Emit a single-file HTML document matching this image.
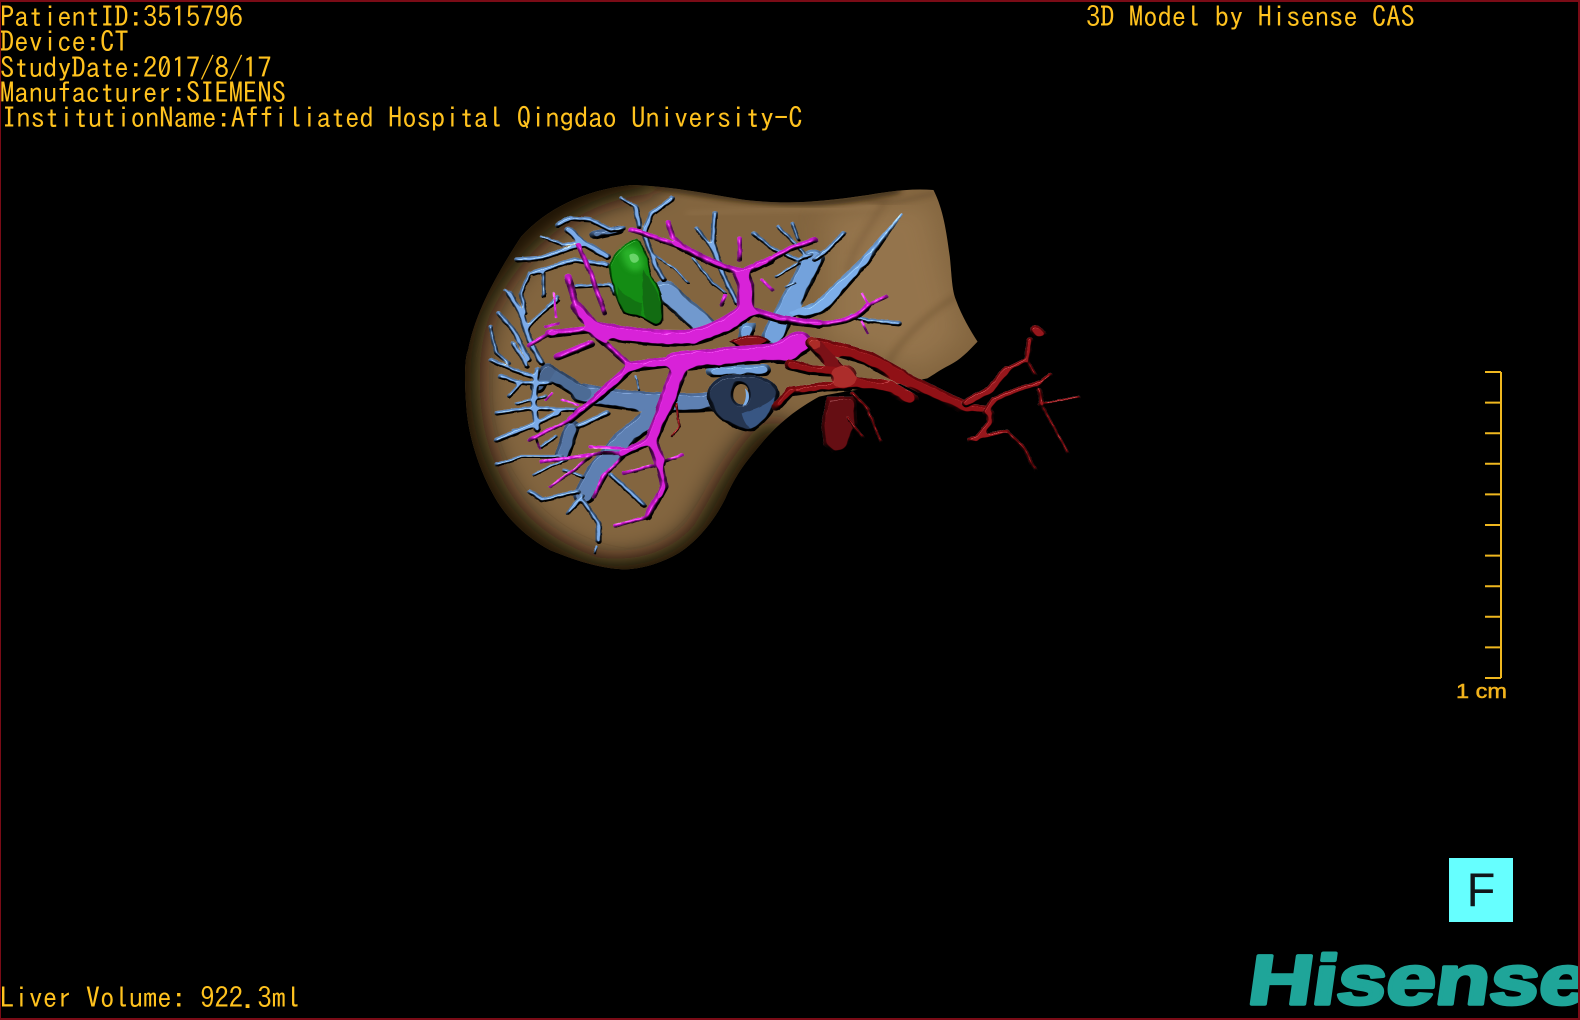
<!DOCTYPE html>
<html lang="en">
<head>
<meta charset="utf-8">
<title>3D Model by Hisense CAS</title>
<style>
html,body{margin:0;padding:0;background:#000;}
#stage{position:relative;width:1580px;height:1020px;background:#000;overflow:hidden;}
#frame{position:absolute;left:0;top:0;width:1577px;height:1016px;border:1px solid #7a0b16;border-top-width:2px;border-right-width:2px;border-bottom-width:2px;pointer-events:none;z-index:5;}
.t{position:absolute;left:0;white-space:pre;font-family:"IPAGothic","Liberation Mono",monospace;font-size:28.6px;line-height:30px;color:#ffc21e;}
#fbox{position:absolute;left:1449px;top:858px;width:64px;height:64px;background:#66ffff;color:#10161a;font-family:"Liberation Sans",sans-serif;font-size:47px;line-height:64px;text-align:center;}
svg{position:absolute;left:0;top:0;}
.z path{stroke-linecap:round;stroke-linejoin:round;}
</style>
</head>
<body>
<div id="stage">
<svg width="1580" height="1020" viewBox="0 0 1580 1020" xmlns="http://www.w3.org/2000/svg">
<defs>
<filter id="blur30" x="-30%" y="-30%" width="160%" height="160%"><feGaussianBlur stdDeviation="34"/></filter>
<filter id="blur8" x="-30%" y="-30%" width="160%" height="160%"><feGaussianBlur stdDeviation="8"/></filter>
<filter id="tube" x="-5%" y="-5%" width="110%" height="110%" color-interpolation-filters="sRGB">
<feTurbulence type="fractalNoise" baseFrequency=".09" numOctaves="2" seed="4" result="n"/>
<feDisplacementMap in="SourceGraphic" in2="n" scale="2.500" xChannelSelector="R" yChannelSelector="G" result="g"/>
<feGaussianBlur in="g" stdDeviation="1.700" result="b"/>
<feComposite in="b" in2="n" operator="arithmetic" k1="0" k2="1" k3=".3" k4="0" result="bump"/>
<feDiffuseLighting in="bump" surfaceScale="7" diffuseConstant="1.150" lighting-color="#fff" result="d"><feDistantLight azimuth="250" elevation="60"/></feDiffuseLighting>
<feBlend in="g" in2="d" mode="multiply" result="m"/>
<feSpecularLighting in="bump" surfaceScale="7" specularConstant=".7" specularExponent="22" lighting-color="#fff" result="s"><feDistantLight azimuth="250" elevation="38"/></feSpecularLighting>
<feComposite in="m" in2="s" operator="arithmetic" k1="0" k2="1" k3=".75" k4="0" result="r"/>
<feComposite in="r" in2="g" operator="in"/>
</filter>
<filter id="trunk" x="-5%" y="-5%" width="110%" height="110%" color-interpolation-filters="sRGB">
<feTurbulence type="fractalNoise" baseFrequency=".07" numOctaves="2" seed="9" result="n"/>
<feDisplacementMap in="SourceGraphic" in2="n" scale="2" xChannelSelector="R" yChannelSelector="G" result="g"/>
<feGaussianBlur in="g" stdDeviation="3.200" result="b"/>
<feComposite in="b" in2="n" operator="arithmetic" k1="0" k2="1" k3=".4" k4="0" result="bump"/>
<feDiffuseLighting in="bump" surfaceScale="11" diffuseConstant="1.150" lighting-color="#fff" result="d"><feDistantLight azimuth="250" elevation="60"/></feDiffuseLighting>
<feBlend in="g" in2="d" mode="multiply" result="m"/>
<feSpecularLighting in="bump" surfaceScale="11" specularConstant=".6" specularExponent="26" lighting-color="#fff" result="s"><feDistantLight azimuth="250" elevation="38"/></feSpecularLighting>
<feComposite in="m" in2="s" operator="arithmetic" k1="0" k2="1" k3=".7" k4="0" result="r"/>
<feComposite in="r" in2="g" operator="in"/>
</filter>
<clipPath id="lc"><path transform="translate(460,170) scale(.40816,.33333)" d="M420,45 C520,48 620,75 700,90 C790,102 860,100 1000,75 C1060,62 1110,55 1160,60 C1185,120 1192,190 1200,260 C1205,320 1205,360 1215,390 C1230,440 1250,480 1268,515 C1245,545 1225,570 1200,585 C1175,600 1160,615 1145,625 C1050,650 950,660 880,680 C820,720 770,770 725,840 C690,890 670,930 650,985 C620,1060 570,1130 520,1160 C470,1190 430,1198 400,1198 C340,1195 280,1170 220,1140 C160,1100 110,1040 80,970 C40,880 18,780 15,700 C10,620 12,560 20,540 C35,440 80,330 150,200 C210,120 300,60 420,45 Z"/></clipPath>
</defs>

<!-- liver -->
<g clip-path="url(#lc)">
<rect x="440" y="170" width="560" height="420" fill="#83653f"/>
<g class="z" fill="none" transform="translate(460,170) scale(.40816,.33333)">
<path filter="url(#blur30)" stroke="#120b04" stroke-width="110" d="M440,20 C260,50 110,190 20,420 C-20,560 -15,760 35,900 C90,1070 190,1160 320,1215 C420,1235 540,1210 620,1095 C670,1000 700,900 770,810"/>
<path filter="url(#blur30)" fill="#a5845a" stroke="none" d="M900,130 L1150,90 L1190,300 L1230,500 L1130,600 L900,500 Z" opacity=".5"/>
<path filter="url(#blur8)" stroke="#2e2010" stroke-width="18" d="M480,48 C600,72 720,98 860,98 C930,96 1000,82 1070,62" opacity=".85"/>
<path filter="url(#blur8)" stroke="#6b4f30" stroke-width="16" d="M1040,90 C1020,150 970,210 950,300" opacity=".3"/>
<path filter="url(#blur8)" stroke="#5c4428" stroke-width="16" d="M1215,380 C1130,440 1060,540 1040,600" opacity=".3"/>
<path filter="url(#blur8)" stroke="#4c3820" stroke-width="10" d="M1000,90 C1040,100 1070,100 1160,70" opacity=".4"/>
<path filter="url(#blur8)" stroke="#a88860" stroke-width="14" d="M560,130 C700,120 860,120 1020,110" opacity=".25"/>
<g stroke="#5a4226" stroke-width="2.500" opacity=".16">
<path d="M60,540 C40,720 70,880 140,990 C210,1090 300,1150 410,1165 C500,1160 570,1090 620,970"/>
<path d="M85,560 C65,720 95,860 165,965 C230,1060 310,1120 410,1135 C490,1130 550,1070 600,960"/>
<path d="M110,370 C70,440 50,500 40,560"/>
</g>
</g>
</g>

<!-- deep blue trunks -->
<g filter="url(#trunk)">
<g class="z" fill="none" transform="translate(460,170) scale(.40816,.33333)" stroke="#5779ac">
<path stroke-width="60" d="M625,695 C500,705 400,695 300,670"/>
<path stroke-width="44" stroke="#45648f" d="M300,670 L215,605"/>
<path stroke-width="56" d="M470,740 L400,810 L340,900 L305,975"/>
<path stroke-width="38" stroke="#4f6f9f" d="M275,770 L250,860"/>
<path stroke-width="26" stroke="#4e6f9e" d="M390,180 L330,195"/>
<path stroke-width="38" stroke="#425e87" d="M215,600 L190,650"/>
<path stroke-width="60" stroke="#6a93c8" d="M500,360 L600,470"/>
<path stroke-width="56" stroke="#6c9cd6" d="M865,265 L840,330 L810,400 L765,500"/>
<path stroke-width="34" stroke="#6c9cd6" d="M620,605 L745,600"/>
<path fill="#75a8e4" stroke="#75a8e4" stroke-width="6" d="M1082,133 L1000,280 L950,350 L900,420 L850,445 L810,430 L870,400 L930,330 L990,260 Z"/>
<path fill="#6c9cd6" stroke="#6c9cd6" stroke-width="3" d="M690,460 L725,460 L715,510 L680,510 Z"/>
</g>
</g>

<!-- fine blue branches -->
<g filter="url(#tube)">
<g class="z" fill="none" transform="translate(460,170) scale(.40816,.33333)" stroke="#6f9fdc">
<path stroke-width="15" d="M240,165 L270,145 L320,150 L370,180 L400,175"/>
<path stroke-width="10" d="M430,110 L395,85"/>
<path stroke-width="14" d="M430,110 L440,170"/>
<path stroke-width="14" d="M520,85 L470,130 L450,190 L480,290 L500,330"/>
<path stroke-width="16" d="M140,270 L200,265 L270,235 L310,225"/>
<path stroke-width="9" d="M200,200 L250,225 L290,215"/>
<path stroke-width="20" d="M265,180 L310,225 L360,260"/>
<path stroke-width="16" d="M180,310 L280,270 L360,285"/>
<path stroke-width="12" d="M280,350 L370,345 L380,370"/>
<path stroke-width="16" d="M120,370 L150,430 L170,510 L200,580"/>
<path stroke-width="11" d="M170,310 L150,370 L160,430"/>
<path stroke-width="11" d="M240,390 L190,440 L160,480"/>
<path stroke-width="9" d="M205,310 L205,380"/>
<path stroke-width="14" d="M95,430 L130,480 L170,570"/>
<path stroke-width="11" d="M75,470 L90,550 L120,580"/>
<path stroke-width="14" d="M75,570 L130,600 L180,620"/>
<path stroke-width="14" d="M100,620 L150,640 L220,640"/>
<path stroke-width="16" d="M190,600 L180,700 L190,780"/>
<path stroke-width="14" d="M90,730 L170,715 L280,720"/>
<path stroke-width="16" d="M90,810 L170,770 L240,730"/>
<path stroke-width="11" d="M90,885 L150,860 L250,860"/>
<path stroke-width="9" d="M180,915 L220,890 L260,870"/>
<path stroke-width="14" d="M170,965 L200,990 L290,965"/>
<path stroke-width="11" d="M300,975 L265,1030"/>
<path stroke-width="14" d="M300,990 L340,1060 L340,1115"/>
<path stroke-width="6" d="M330,1150 L335,1130"/>
<path stroke-width="14" d="M370,915 L420,970 L450,1005"/>
<path stroke-width="16" d="M290,770 L360,730"/>
<path stroke-width="14" d="M625,130 L620,220 L650,330 L680,400"/>
<path stroke-width="11" d="M580,175 L620,240 L640,300"/>
<path stroke-width="9" d="M570,265 L620,340 L650,370"/>
<path stroke-width="7" d="M470,250 L530,300 L560,340"/>
<path stroke-width="12" d="M720,190 L770,240 L830,270 L860,255"/>
<path stroke-width="11" d="M780,170 L820,220 L850,260"/>
<path stroke-width="9" d="M815,160 L830,210"/>
<path stroke-width="14" d="M940,190 L900,240 L870,270"/>
<path stroke-width="9" d="M775,320 L830,280"/>
<path stroke-width="7" d="M800,350 L820,340"/>
<path stroke-width="15" d="M1075,460 L1000,452 L960,440"/>
<path stroke-width="6" d="M430,620 L440,660"/>
<path stroke-width="7" d="M130,780 L180,770"/>
<path stroke-width="7" d="M110,360 L135,385"/>
<path stroke-width="12" d="M130,520 L165,590"/>
<path stroke-width="11" d="M150,640 L120,680"/>
<path stroke-width="10" d="M140,700 L210,680"/>
<path stroke-width="11" d="M235,800 L200,830"/>
<path stroke-width="10" d="M215,410 L240,380"/>
<path stroke-width="11" d="M255,900 L300,920"/>
<path stroke-width="10" d="M265,1030 L290,1000"/>
</g>
</g>

<!-- dark portal ring -->
<g filter="url(#trunk)">
<g class="z" transform="translate(460,170) scale(.40816,.33333)">
<path fill="#1f2f4a" d="M605,670 C615,625 650,605 700,615 C745,610 780,640 782,670 C780,715 760,745 720,785 C690,790 660,765 640,750 C620,730 605,700 605,670 Z M687,642 C672,645 668,665 670,685 C675,705 695,710 705,690 C712,665 705,640 687,642 Z" fill-rule="evenodd"/>
<path fill="#314f7c" d="M690,730 C720,720 760,700 770,680 C770,715 750,745 720,780 C705,775 695,755 690,730 Z"/>
</g>
</g>
<g class="z" transform="translate(460,170) scale(.40816,.33333)">
<path fill="#7fb0ea" d="M698,655 C710,665 712,690 700,705 L692,708 C702,690 702,670 698,655 Z"/>
</g>

<!-- green -->
<g filter="url(#tube)">
<g class="z" transform="translate(460,170) scale(.40816,.33333)">
<path fill="#077f07" d="M365,290 C372,250 395,225 435,205 C455,230 462,265 470,320 C490,350 500,370 498,450 C495,465 485,468 480,468 C465,462 455,450 445,445 C425,440 410,435 400,430 C385,400 378,370 375,350 C368,325 365,310 365,290 Z"/>
<path fill="#055f05" d="M450,300 C470,340 495,370 498,450 C490,468 470,462 455,445 C445,400 445,340 450,300 Z"/>
<path fill="#056605" d="M385,350 C400,375 430,395 445,400 L445,445 C425,440 410,435 400,430 C390,405 385,380 385,350 Z"/>
</g>
</g>
<g class="z" transform="translate(460,170) scale(.40816,.33333)">
<path filter="url(#blur8)" fill="#30c030" d="M395,240 C420,215 450,240 450,290 C430,320 400,300 395,240 Z" opacity=".75"/>
<path fill="#9cf09c" opacity=".55" d="M415,255 C425,245 440,255 438,270 C430,285 415,280 415,255 Z"/>
</g>

<!-- dark red blob + thin -->
<g filter="url(#tube)">
<g class="z" fill="none" transform="translate(460,170) scale(.40816,.33333)">
<path fill="#7c080e" d="M660,515 C680,495 730,485 762,515 C740,525 720,535 700,550 C690,535 675,525 660,515 Z"/>
<path stroke="#a01218" stroke-width="6" d="M530,700 L537,770 L520,800"/>
</g>
</g>

<!-- magenta -->
<g filter="url(#trunk)">
<g class="z" fill="none" transform="translate(460,170) scale(.40816,.33333)" stroke="#d21bd2">
<path stroke-width="50" d="M335,480 C430,500 480,505 550,505"/>
<path stroke-width="50" d="M550,505 C600,500 660,465 700,425"/>
<path stroke-width="42" d="M700,425 L700,345 L690,315"/>
<path stroke-width="22" d="M690,305 C640,295 590,260 540,230"/>
<path stroke-width="16" d="M540,230 L460,195 L420,180"/>
<path stroke-width="13" d="M510,155 L520,200 L560,245"/>
<path stroke-width="24" d="M700,305 L760,270"/>
<path stroke-width="16" d="M760,270 L810,235 L870,210"/>
<path stroke-width="12" d="M685,205 L685,270"/>
<path stroke-width="9" d="M740,330 L765,360"/>
<path stroke-width="10" d="M650,375 L640,405"/>
<path stroke-width="26" d="M720,425 L790,450 L880,462"/>
<path stroke-width="18" d="M880,462 C930,462 975,450 1000,405"/>
<path stroke-width="10" d="M1000,405 L1045,380"/>
<path stroke-width="6" d="M985,370 L1000,400"/>
<path stroke-width="6" d="M985,455 L1000,490"/>
<path stroke-width="32" d="M335,480 L285,410"/>
<path stroke-width="18" d="M285,410 L265,320"/>
<path stroke-width="13" d="M290,225 L320,310 L355,430"/>
<path stroke-width="24" d="M330,478 L220,492"/>
<path stroke-width="12" d="M220,492 L170,525"/>
<path stroke-width="9" d="M210,470 L240,460"/>
<path stroke-width="22" d="M320,522 L240,560"/>
<path stroke-width="18" d="M340,505 L420,590"/>
<path stroke-width="32" d="M420,590 L540,572"/>
<path stroke-width="58" d="M530,575 L660,560"/>
<path stroke-width="58" d="M650,560 L810,545"/>
<path stroke-width="72" d="M790,548 L830,520"/>
<path stroke-width="26" d="M420,590 L340,680"/>
<path stroke-width="20" d="M340,680 L270,750"/>
<path stroke-width="11" d="M270,750 L170,810"/>
<path stroke-width="44" d="M535,605 L500,720"/>
<path stroke-width="36" d="M500,720 L470,810"/>
<path stroke-width="24" d="M470,810 L400,850"/>
<path stroke-width="28" d="M470,810 L490,880"/>
<path stroke-width="20" d="M490,880 L500,950 L460,1040"/>
<path stroke-width="10" d="M460,1040 L380,1068"/>
<path stroke-width="11" d="M480,885 L400,910"/>
<path stroke-width="9" d="M500,875 L545,855"/>
<path stroke-width="11" d="M400,850 L340,850 L290,860 L200,875"/>
<path stroke-width="9" d="M400,835 L320,830"/>
<path stroke-width="11" d="M400,860 L350,920 L330,980"/>
<path stroke-width="9" d="M320,860 L280,900 L220,950"/>
<path stroke-width="7" d="M210,690 L225,670"/>
<path stroke-width="7" d="M250,690 L290,705"/>
<path stroke-width="6" d="M185,800 L195,835"/>
<path stroke-width="6" d="M230,370 L235,440"/>
</g>
</g>

<!-- red arteries -->
<g filter="url(#trunk)">
<g class="z" fill="none" transform="translate(460,170) scale(.40816,.33333)" stroke="#8a0a0f">
<path fill="#5e070c" stroke="none" d="M898,680 L970,680 L972,770 L950,840 L920,852 L890,825 L885,770 Z"/>
<path stroke-width="44" d="M875,525 L930,540 L1000,565 L1080,620"/>
<path stroke-width="38" d="M1080,620 L1180,680 L1240,715"/>
<path stroke-width="26" d="M1240,715 L1290,720"/>
<path stroke-width="36" stroke="#740a10" d="M865,520 L920,590 L945,620"/>
<path stroke-width="32" d="M810,585 L860,600 L920,605"/>
<path stroke-width="24" d="M775,710 L810,665"/>
<path stroke-width="28" d="M810,665 L900,650 L950,650"/>
<path stroke-width="38" d="M970,640 L1050,650 L1105,690"/>
<path fill="#a62624" stroke="none" d="M942,585 C965,585 975,605 972,625 C970,645 950,655 930,652 C912,648 905,625 910,605 C915,592 930,585 942,585 Z"/>
<path fill="#a62420" stroke="none" d="M860,500 C875,500 885,515 880,530 C870,545 855,535 852,520 C852,510 855,503 860,500 Z"/>
</g>
</g>
<g filter="url(#tube)">
<g class="z" fill="none" transform="translate(460,170) scale(.40816,.33333)" stroke="#8a0a0f">
<path stroke-width="24" d="M1240,700 L1300,660 L1340,600"/>
<path stroke-width="16" d="M1340,600 L1390,570 L1395,510"/>
<path stroke-width="30" d="M1412,480 L1420,490"/>
<path stroke-width="10" d="M1390,575 L1410,615"/>
<path stroke-width="20" d="M1290,725 L1310,690 L1370,660 L1420,640"/>
<path stroke-width="12" d="M1420,640 L1445,615"/>
<path stroke-width="12" d="M1420,660 L1425,705"/>
<path stroke-width="7" d="M1425,705 L1490,850"/>
<path stroke-width="9" d="M1420,705 L1515,682"/>
<path stroke-width="18" d="M1300,730 L1300,760 L1265,810"/>
<path stroke-width="15" d="M1250,810 L1340,785"/>
<path stroke-width="9" d="M1340,785 L1380,830 L1410,900"/>
<path stroke-width="7" d="M1340,785 L1390,850"/>
<path stroke-width="10" d="M960,670 L1000,720"/>
<path stroke-width="7" d="M1000,720 L1030,815"/>
<path stroke-width="8" d="M950,745 L985,800"/>
</g>
</g>

<!-- scale bar -->
<g stroke="#f0b81f" stroke-width="2" fill="none">
<path d="M1501,372 V678"/>
<path d="M1485,372H1501M1485,402.600H1501M1485,433.200H1501M1485,463.800H1501M1485,494.400H1501M1485,525H1501M1485,555.600H1501M1485,586.200H1501M1485,616.800H1501M1485,647.400H1501M1485,678H1501"/>
</g>
<text x="1456" y="698" font-family="Liberation Sans, sans-serif" font-size="20" fill="#f2b31c" stroke="#f2b31c" stroke-width=".5" textLength="51" lengthAdjust="spacingAndGlyphs">1 cm</text>

<!-- logo -->
<text transform="translate(1246,1004) skewX(-8)" x="0" y="0" font-family="Liberation Sans, sans-serif" font-weight="700" font-size="70" fill="#1fa599" stroke="#1fa599" stroke-width="3.500" stroke-linejoin="round" textLength="340" lengthAdjust="spacingAndGlyphs">Hisense</text>
</svg>

<div class="t" style="top:2px">PatientID:3515796</div>
<div class="t" style="top:27px">Device:CT</div>
<div class="t" style="top:53px">StudyDate:2017/8/17</div>
<div class="t" style="top:78px">Manufacturer:SIEMENS</div>
<div class="t" style="top:103px;left:2px">InstitutionName:Affiliated Hospital Qingdao University-C</div>
<div class="t" style="top:2px;left:1086px">3D Model by Hisense CAS</div>
<div class="t" style="top:983px">Liver Volume: 922.3ml</div>
<div id="fbox">F</div>
<div id="frame"></div>
</div>
</body>
</html>
